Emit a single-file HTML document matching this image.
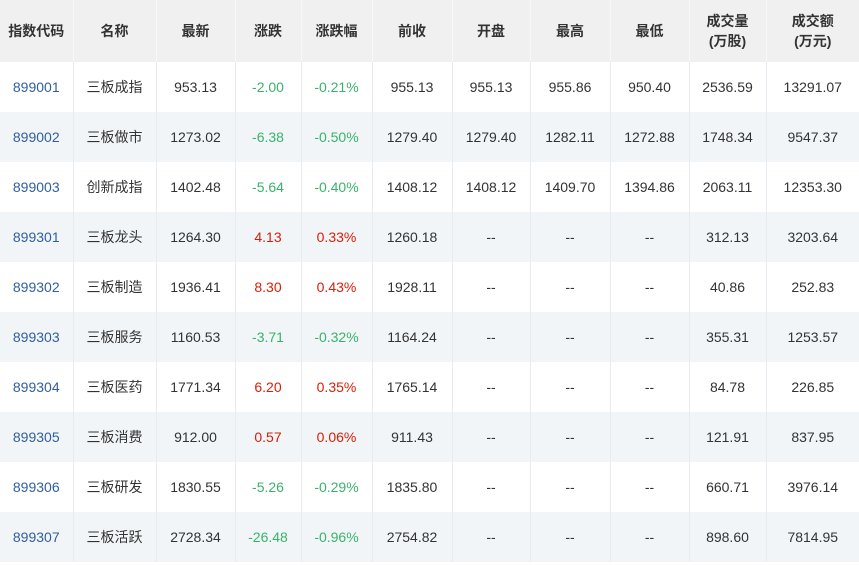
<!DOCTYPE html>
<html><head><meta charset="utf-8"><style>
body{margin:0;width:859px;height:565px;background:#fff;overflow:hidden;font-family:"Liberation Sans","Noto Sans CJK SC",sans-serif;}
table{border-collapse:collapse;table-layout:fixed;width:859px;font-size:14px;color:#333;}
td,th{text-align:center;padding:0;border-right:1px solid #e8ecf0;white-space:nowrap;}
th{height:62px;background:#f0f0f0;font-weight:bold;font-size:14px;color:#333;line-height:20px;border-right:1px solid #f7f7f7;}
td{height:50px;}
tr:nth-child(odd) td{background:#f2f5f8;}
td:last-child,th:last-child{border-right:none;}
.c{color:#2f5f9e}.g{color:#3ab36a}.r{color:#d81e06}
</style></head><body>
<table>
<colgroup><col style="width:73px"><col style="width:83px"><col style="width:79px"><col style="width:66px"><col style="width:71px"><col style="width:80px"><col style="width:78px"><col style="width:80px"><col style="width:79px"><col style="width:77px"><col style="width:93px"></colgroup>
<tr><th>指数代码</th><th>名称</th><th>最新</th><th>涨跌</th><th>涨跌幅</th><th>前收</th><th>开盘</th><th>最高</th><th>最低</th><th>成交量<br>(万股)</th><th>成交额<br>(万元)</th></tr>
<tr><td class="c">899001</td><td>三板成指</td><td>953.13</td><td class="g">-2.00</td><td class="g">-0.21%</td><td>955.13</td><td>955.13</td><td>955.86</td><td>950.40</td><td>2536.59</td><td>13291.07</td></tr>
<tr><td class="c">899002</td><td>三板做市</td><td>1273.02</td><td class="g">-6.38</td><td class="g">-0.50%</td><td>1279.40</td><td>1279.40</td><td>1282.11</td><td>1272.88</td><td>1748.34</td><td>9547.37</td></tr>
<tr><td class="c">899003</td><td>创新成指</td><td>1402.48</td><td class="g">-5.64</td><td class="g">-0.40%</td><td>1408.12</td><td>1408.12</td><td>1409.70</td><td>1394.86</td><td>2063.11</td><td>12353.30</td></tr>
<tr><td class="c">899301</td><td>三板龙头</td><td>1264.30</td><td class="r">4.13</td><td class="r">0.33%</td><td>1260.18</td><td>--</td><td>--</td><td>--</td><td>312.13</td><td>3203.64</td></tr>
<tr><td class="c">899302</td><td>三板制造</td><td>1936.41</td><td class="r">8.30</td><td class="r">0.43%</td><td>1928.11</td><td>--</td><td>--</td><td>--</td><td>40.86</td><td>252.83</td></tr>
<tr><td class="c">899303</td><td>三板服务</td><td>1160.53</td><td class="g">-3.71</td><td class="g">-0.32%</td><td>1164.24</td><td>--</td><td>--</td><td>--</td><td>355.31</td><td>1253.57</td></tr>
<tr><td class="c">899304</td><td>三板医药</td><td>1771.34</td><td class="r">6.20</td><td class="r">0.35%</td><td>1765.14</td><td>--</td><td>--</td><td>--</td><td>84.78</td><td>226.85</td></tr>
<tr><td class="c">899305</td><td>三板消费</td><td>912.00</td><td class="r">0.57</td><td class="r">0.06%</td><td>911.43</td><td>--</td><td>--</td><td>--</td><td>121.91</td><td>837.95</td></tr>
<tr><td class="c">899306</td><td>三板研发</td><td>1830.55</td><td class="g">-5.26</td><td class="g">-0.29%</td><td>1835.80</td><td>--</td><td>--</td><td>--</td><td>660.71</td><td>3976.14</td></tr>
<tr><td class="c">899307</td><td>三板活跃</td><td>2728.34</td><td class="g">-26.48</td><td class="g">-0.96%</td><td>2754.82</td><td>--</td><td>--</td><td>--</td><td>898.60</td><td>7814.95</td></tr>
</table>
</body></html>
